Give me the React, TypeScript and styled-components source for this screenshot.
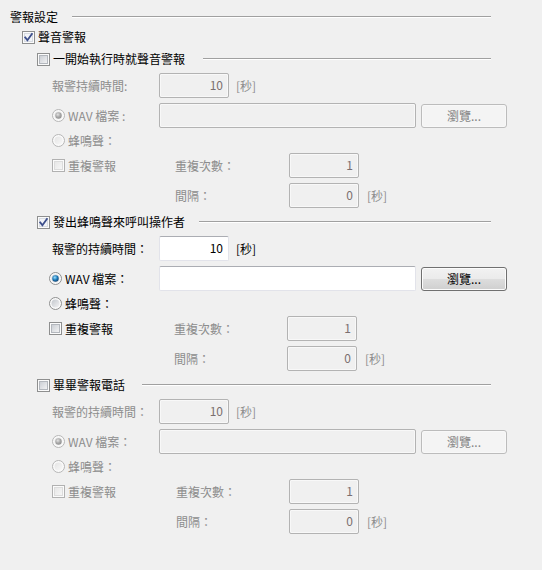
import React from "react";
import styled, { createGlobalStyle } from "styled-components";

const GlobalStyle = createGlobalStyle`
  html, body { margin: 0; padding: 0; background: #f0f0f0; }
  body { font-family: "Noto Sans CJK TC", "Noto Sans", sans-serif; font-size: 12px; }
`;

const DISABLED = "#8d8d8d";

const Page = styled.div`
  width: 542px;
  height: 570px;
  box-sizing: border-box;
  padding: 9px 51px 0 10px;
  background: #f0f0f0;
  color: #000;
  font-family: "Noto Sans CJK TC", "Noto Sans", sans-serif;
  font-size: 12px;
  line-height: 16px;
`;

const GroupHeader = styled.div`
  display: flex;
  align-items: center;
  height: 16px;
`;

const EtchedLine = styled.div<{ $gap: number }>`
  flex: 1;
  height: 0;
  margin-left: ${(p) => p.$gap}px;
  border-top: 1px solid #a0a0a0;
  border-bottom: 1px solid #ffffff;
`;

const CheckRow = styled.div<{ $indent: number; $top: number }>`
  display: flex;
  align-items: center;
  height: 16px;
  gap: 3px;
  margin-left: ${(p) => p.$indent}px;
  margin-top: ${(p) => p.$top}px;
  white-space: nowrap;
`;

const Body = styled.div`
  margin-top: 6px;
  margin-left: 42px;
  display: flex;
  flex-direction: column;
  gap: 5px;
`;

const Row = styled.div<{ $h: number }>`
  display: flex;
  align-items: center;
  height: ${(p) => p.$h}px;
`;

const Cell = styled.div<{ $w: number; $shift?: number; $off?: boolean }>`
  width: ${(p) => p.$w}px;
  margin-left: ${(p) => p.$shift ?? 0}px;
  flex-shrink: 0;
  display: flex;
  align-items: center;
  gap: 3px;
  white-space: nowrap;
  color: ${(p) => (p.$off ? DISABLED : "#000")};
`;

const Field = styled.input<{ $w: number; $off?: boolean }>`
  box-sizing: border-box;
  flex-shrink: 0;
  width: ${(p) => p.$w}px;
  height: 25px;
  margin: 0;
  padding: 0 5px 2px;
  text-align: right;
  font-family: "Noto Sans CJK TC", "Noto Sans", sans-serif;
  font-size: 12px;
  outline: none;
  border-radius: 2px;
  border: 1px solid ${(p) => (p.$off ? "#b3b3b3" : "#e2e3ea")};
  border-top-color: ${(p) => (p.$off ? "#b3b3b3" : "#abadb3")};
  background: ${(p) => (p.$off ? "#f0f0f0" : "#ffffff")};
  box-shadow: ${(p) => (p.$off ? "inset 0 0 0 1px #f8f8f8" : "none")};
  color: ${(p) => (p.$off ? "#7a6f6f" : "#000")};
`;

const Unit = styled.span<{ $gap: number; $off?: boolean }>`
  flex-shrink: 0;
  margin-left: ${(p) => p.$gap}px;
  white-space: nowrap;
  color: ${(p) => (p.$off ? DISABLED : "#000")};
`;

const BrowseButton = styled.button<{ $off?: boolean }>`
  box-sizing: border-box;
  flex-shrink: 0;
  width: 86px;
  height: 24px;
  margin: 0 0 0 5px;
  padding: 0 0 1px;
  font-family: "Noto Sans CJK TC", "Noto Sans", sans-serif;
  font-size: 12px;
  border-radius: 3px;
  border: 1px solid ${(p) => (p.$off ? "#bcbcbc" : "#707070")};
  background: ${(p) =>
    p.$off
      ? "#f4f4f4"
      : "linear-gradient(#f2f2f2 0%, #ebebeb 48%, #dddddd 52%, #cfcfcf 100%)"};
  box-shadow: inset 0 0 0 1px ${(p) => (p.$off ? "#f8f8f8" : "#fcfcfc")};
  color: ${(p) => (p.$off ? "#838383" : "#000")};
`;

const Caption = styled.span<{ $off?: boolean }>`
  color: ${(p) => (p.$off ? DISABLED : "#000")};
`;

function CheckBox({ checked, off }: { checked?: boolean; off?: boolean }) {
  const gid = off ? "cbg-off" : "cbg-on";
  return (
    <svg width="13" height="13" viewBox="0 0 13 13" style={{ flexShrink: 0 }}>
      <defs>
        <linearGradient id={gid} x1="0" y1="0" x2="1" y2="1">
          <stop offset="0" stopColor={off ? "#e6e6e6" : "#c9cdd3"} />
          <stop offset="1" stopColor={off ? "#f7f7f7" : "#f4f4f5"} />
        </linearGradient>
      </defs>
      <rect x="0.5" y="0.5" width="12" height="12" fill="#fbfbfb" stroke={off ? "#b1b1b1" : "#8e8f8f"} />
      {checked ? (
        <rect x="2.5" y="2.5" width="8" height="8" fill="#f2f4f8" stroke="#d7dbe2" />
      ) : (
        <rect x="2.5" y="2.5" width="8" height="8" fill={`url(#${gid})`} stroke={off ? "#dcdcdc" : "#b3b7bd"} />
      )}
      {checked && (
        <path d="M3.2 6.4 L5.4 9.2 L9.9 3" fill="none" stroke="#3d4f8c" strokeWidth="1.8" strokeLinecap="square" />
      )}
    </svg>
  );
}

function Radio({ checked, off }: { checked?: boolean; off?: boolean }) {
  const key = `${checked ? "c" : "u"}${off ? "d" : "e"}`;
  return (
    <svg width="13" height="13" viewBox="0 0 13 13" style={{ flexShrink: 0 }}>
      <defs>
        <linearGradient id={`rg-${key}`} x1="0" y1="0" x2="1" y2="1">
          <stop offset="0" stopColor={off ? "#e4e4e4" : "#c3c7cd"} />
          <stop offset="1" stopColor={off ? "#f8f8f8" : "#f3f3f4"} />
        </linearGradient>
        <radialGradient id={`rd-${key}`} cx="0.4" cy="0.35" r="0.7">
          <stop offset="0" stopColor={off ? "#e4e4e4" : "#9ee0ff"} />
          <stop offset="0.55" stopColor={off ? "#a8a8a8" : "#1b79b8"} />
          <stop offset="1" stopColor={off ? "#8f8f8f" : "#16426e"} />
        </radialGradient>
      </defs>
      <circle cx="6.5" cy="6.5" r="6" fill="#fafafa" stroke={off ? "#b6b6b6" : "#8e8f8f"} />
      <circle cx="6.5" cy="6.5" r="4" fill={`url(#rg-${key})`} />
      {checked && <circle cx="6.5" cy="6.5" r="3.2" fill={`url(#rd-${key})`} />}
    </svg>
  );
}

type SectionProps = {
  title: string;
  checked: boolean;
  lineGap: number;
  shift: number;
  repeatX: number;
  inputX: number;
  durationLabel: string;
  wavLabel: string;
};

function AlarmSection({ title, checked, lineGap, shift, repeatX, inputX, durationLabel, wavLabel }: SectionProps) {
  const off = !checked;
  const repeatCellW = repeatX - 52 - shift;
  const repeatLabelW = inputX - repeatX;
  return (
    <>
      <CheckRow $indent={27} $top={6}>
        <CheckBox checked={checked} />
        <Caption>{title}</Caption>
        <EtchedLine $gap={lineGap} />
      </CheckRow>
      <Body>
        <Row $h={25}>
          <Cell $w={107} $off={off}>{durationLabel}</Cell>
          <Field $w={70} $off={off} readOnly value="10" />
          <Unit $gap={7} $off={off}>[秒]</Unit>
        </Row>
        <Row $h={25}>
          <Cell $w={107 - shift} $shift={shift} $off={off}>
            <Radio checked off={off} />
            <span>{wavLabel}</span>
          </Cell>
          <Field $w={257} $off={off} readOnly value="" />
          <BrowseButton $off={off} disabled={off}>瀏覽...</BrowseButton>
        </Row>
        <Row $h={15}>
          <Cell $w={107 - shift} $shift={shift} $off={off}>
            <Radio off={off} />
            <span>蜂鳴聲：</span>
          </Cell>
        </Row>
        <Row $h={25}>
          <Cell $w={repeatCellW} $shift={shift} $off={off}>
            <CheckBox off={off} />
            <span>重複警報</span>
          </Cell>
          <Cell $w={repeatLabelW} $off>重複次數：</Cell>
          <Field $w={70} $off readOnly value="1" />
        </Row>
        <Row $h={25}>
          <Cell $w={repeatCellW} $shift={shift} />
          <Cell $w={repeatLabelW} $off>間隔：</Cell>
          <Field $w={70} $off readOnly value="0" />
          <Unit $gap={8} $off>[秒]</Unit>
        </Row>
      </Body>
    </>
  );
}

export default function App() {
  return (
    <Page>
      <GlobalStyle />
      <GroupHeader>
        <Caption>警報設定</Caption>
        <EtchedLine $gap={14} />
      </GroupHeader>
      <CheckRow $indent={12} $top={4}>
        <CheckBox checked />
        <Caption>聲音警報</Caption>
      </CheckRow>
      <AlarmSection
        title="一開始執行時就聲音警報"
        checked={false}
        lineGap={15}
        shift={0}
        repeatX={175}
        inputX={289}
        durationLabel="報警持續時間:"
        wavLabel="WAV 檔案 :"
      />
      <AlarmSection
        title="發出蜂鳴聲來呼叫操作者"
        checked
        lineGap={11}
        shift={-3}
        repeatX={174}
        inputX={287}
        durationLabel="報警的持續時間："
        wavLabel="WAV 檔案："
      />
      <AlarmSection
        title="畢畢警報電話"
        checked={false}
        lineGap={14}
        shift={0}
        repeatX={176}
        inputX={289}
        durationLabel="報警的持續時間："
        wavLabel="WAV 檔案："
      />
    </Page>
  );
}
